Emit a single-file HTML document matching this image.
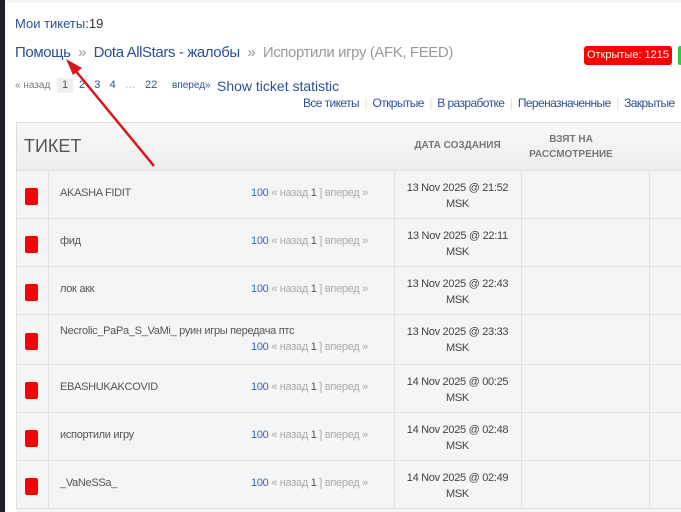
<!DOCTYPE html>
<html><head><meta charset="utf-8"><style>
html,body{margin:0;width:681px;height:512px;overflow:hidden}
body{background:#fff;font-family:"Liberation Sans","Noto Sans CJK SC",sans-serif;position:relative}
.a{position:absolute;white-space:nowrap}
.blue{color:#2c4f96}
.row{position:absolute;left:16px;width:665px;height:48px;background:#f5f5f5;border-top:1px solid #e2e2e2}
.c{position:absolute;top:0;bottom:0;border-left:1px solid #e2e2e2}
.sq{position:absolute;left:9px;top:17px;width:13px;height:17px;background:#f00;border-radius:2px}
.t{position:absolute;left:44px;top:16px;font-size:11px;color:#555;letter-spacing:-0.3px}
.pg{position:absolute;left:235px;top:16px;font-size:11px;color:#aaa;letter-spacing:-0.3px}
.pg b{font-weight:normal;color:#3a62b0}.pg i{font-style:normal;color:#555}
.d{position:absolute;left:378px;width:127px;top:9px;text-align:center;font-size:11px;line-height:16px;color:#444;letter-spacing:-0.3px}
</style></head><body>
<div class="a" style="left:0;top:0;width:5px;height:512px;background:#1d1f26"></div>
<div class="a" style="left:5px;top:0;width:676px;height:3px;background:#f2f4f6"></div>
<div class="a" style="left:15px;top:16px;font-size:13px;color:#333"><span class="blue">Мои тикеты</span>:19</div>
<div class="a" style="left:15px;top:44px;font-size:15px;color:#999;letter-spacing:-0.4px"><span class="blue">Помощь</span> &nbsp;» &nbsp;<span class="blue">Dota AllStars - жалобы</span> &nbsp;» &nbsp;Испортили игру (AFK, FEED)</div>
<div class="a" style="left:584px;top:46px;width:88px;height:19px;background:#f00;border-radius:3px;color:#fff;font-size:11px;line-height:19px;text-align:center">Открытые: 1215</div>
<div class="a" style="left:678px;top:46px;width:5px;height:19px;background:#3c3;border-radius:2px"></div>
<div class="a" style="left:15px;top:80px;font-size:10px;color:#777">« назад</div>
<div class="a" style="left:57px;top:78px;width:16px;height:15px;background:#eee;border-radius:2px;font-size:11px;color:#555;text-align:center;line-height:15px">1</div>
<div class="a blue" style="left:79px;top:79px;font-size:11px">2 &nbsp; 3 &nbsp; 4 &nbsp; <span style="color:#aaa">…</span> &nbsp; 22</div>
<div class="a blue" style="left:172px;top:80px;font-size:10px">вперед»</div>
<div class="a blue" style="left:217px;top:78px;font-size:14px">Show ticket statistic</div>
<div class="a blue" style="left:303px;top:96px;font-size:12px;letter-spacing:-0.6px">Все тикеты <span style="color:#ddd">&nbsp;|&nbsp;</span> Открытые <span style="color:#ddd">&nbsp;|&nbsp;</span> В разработке <span style="color:#ddd">&nbsp;|&nbsp;</span> Переназначенные <span style="color:#ddd">&nbsp;|&nbsp;</span> Закрытые</div>
<div class="a" style="left:16px;top:122px;width:665px;height:48px;background:linear-gradient(#f9f9f9,#ececec);border-top:1px solid #ddd;border-left:1px solid #ddd"></div>
<div class="a" style="left:24px;top:136px;font-size:18px;color:#555">ТИКЕТ</div>
<div class="a" style="left:394px;top:140px;width:127px;text-align:center;font-size:10px;color:#777;font-weight:bold">ДАТА СОЗДАНИЯ</div>
<div class="a" style="left:521px;top:132px;width:100px;text-align:center;font-size:10px;line-height:15px;color:#777;font-weight:bold;white-space:normal">ВЗЯТ НА<br>РАССМОТРЕНИЕ</div>

<div class="row" style="top:170px"><div class="c" style="left:0"></div><div class="c" style="left:32px"></div><div class="c" style="left:378px"></div><div class="c" style="left:505px"></div><div class="c" style="left:633px"></div><div class="sq"></div><div class="t">AKASHA FIDIT</div><div class="pg"><b>100</b> « назад <i>1</i> ] вперед »</div><div class="d">13 Nov 2025 @ 21:52<br>MSK</div></div>
<div class="row" style="top:218px"><div class="c" style="left:0"></div><div class="c" style="left:32px"></div><div class="c" style="left:378px"></div><div class="c" style="left:505px"></div><div class="c" style="left:633px"></div><div class="sq"></div><div class="t">фид</div><div class="pg"><b>100</b> « назад <i>1</i> ] вперед »</div><div class="d">13 Nov 2025 @ 22:11<br>MSK</div></div>
<div class="row" style="top:266px"><div class="c" style="left:0"></div><div class="c" style="left:32px"></div><div class="c" style="left:378px"></div><div class="c" style="left:505px"></div><div class="c" style="left:633px"></div><div class="sq"></div><div class="t">лок акк</div><div class="pg"><b>100</b> « назад <i>1</i> ] вперед »</div><div class="d">13 Nov 2025 @ 22:43<br>MSK</div></div>
<div class="row" style="top:314px;height:49px"><div class="c" style="left:0"></div><div class="c" style="left:32px"></div><div class="c" style="left:378px"></div><div class="c" style="left:505px"></div><div class="c" style="left:633px"></div><div class="sq" style="top:18px"></div><div class="t" style="top:10px">Necrolic_PaPa_S_VaMi_ руин игры передача птс</div><div class="pg" style="top:26px"><b>100</b> « назад <i>1</i> ] вперед »</div><div class="d">13 Nov 2025 @ 23:33<br>MSK</div></div>
<div class="row" style="top:364px"><div class="c" style="left:0"></div><div class="c" style="left:32px"></div><div class="c" style="left:378px"></div><div class="c" style="left:505px"></div><div class="c" style="left:633px"></div><div class="sq"></div><div class="t">EBASHUKAKCOVID</div><div class="pg"><b>100</b> « назад <i>1</i> ] вперед »</div><div class="d">14 Nov 2025 @ 00:25<br>MSK</div></div>
<div class="row" style="top:412px"><div class="c" style="left:0"></div><div class="c" style="left:32px"></div><div class="c" style="left:378px"></div><div class="c" style="left:505px"></div><div class="c" style="left:633px"></div><div class="sq"></div><div class="t">испортили игру</div><div class="pg"><b>100</b> « назад <i>1</i> ] вперед »</div><div class="d">14 Nov 2025 @ 02:48<br>MSK</div></div>
<div class="row" style="top:460px"><div class="c" style="left:0"></div><div class="c" style="left:32px"></div><div class="c" style="left:378px"></div><div class="c" style="left:505px"></div><div class="c" style="left:633px"></div><div class="sq"></div><div class="t">_VaNeSSa_</div><div class="pg"><b>100</b> « назад <i>1</i> ] вперед »</div><div class="d">14 Nov 2025 @ 02:49<br>MSK</div></div>
<div class="row" style="top:508px;height:3px"></div>

<svg class="a" style="left:0;top:0" width="681" height="512"><line x1="154" y1="166" x2="70" y2="64" stroke="#d9141a" stroke-width="2.5"/><path d="M66 59 L82 68 L73 75 Z" fill="#d9141a"/></svg>
</body></html>
